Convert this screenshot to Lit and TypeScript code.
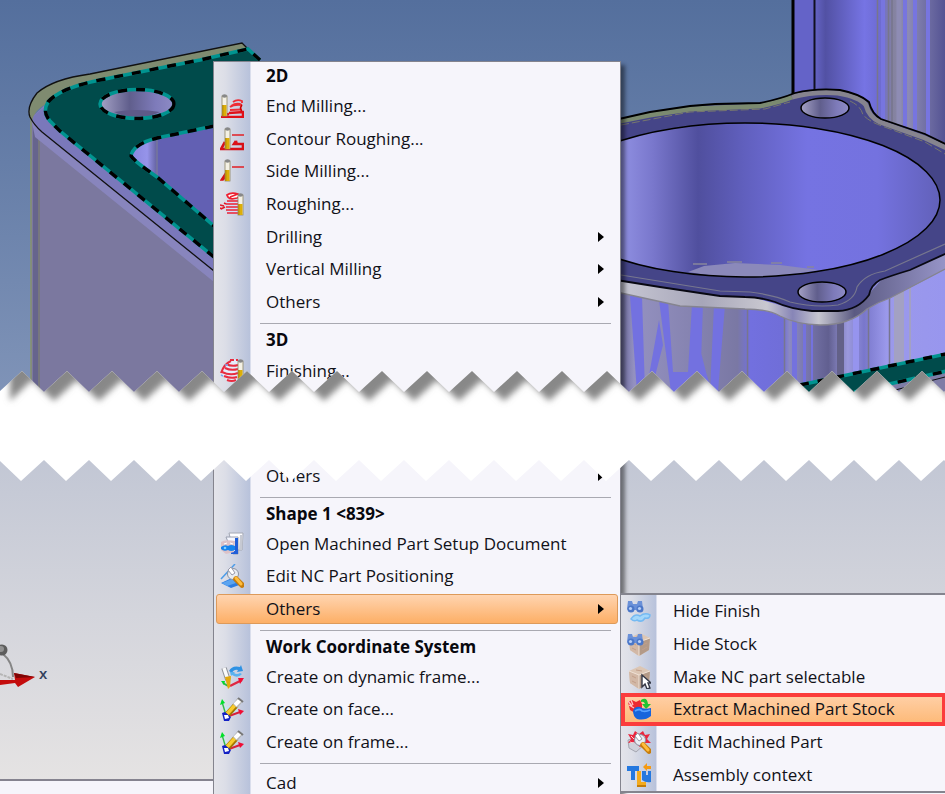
import { LitElement, html, svg, css, nothing } from "lit";
import { customElement, property } from "lit/decorators.js";

type Entry = { label: string; icon?: string; sub?: boolean; state?: string };

const cutter = (x: number, y: number) => svg`
  <rect x=${x} y=${y + 2} width="5" height="20" fill="#f4f1e4" stroke="#8d8564" stroke-width=".8"/>
  <rect x=${x + 0.5} y=${y + 11} width="4" height="11" fill="#dcae08"/>
  <path d="M${x + 0.8} ${y + 11}v11" stroke="#a57c00"/>
  <ellipse cx=${x + 2.5} cy=${y + 2} rx="2.6" ry="1.7" fill="#888"/>`;

const pencilAxes = svg`
  <path d="M3 6L8 20" stroke="#cfe6ee" stroke-width="3"/>
  <path d="M2 5L6 18" stroke="#35b84a" stroke-width="1.400"/><path d="M0 8L2 2L5 6Z" fill="#00e02a"/>
  <path d="M9 19L20 15" stroke="#d8213b" stroke-width="2"/><path d="M18 12L24 14L20 18Z" fill="#f00c34"/>
  <path d="M7 18L16 8" stroke="#a47700" stroke-width="6"/><path d="M7 17L16 7" stroke="#f9cb2c" stroke-width="3.500"/>
  <path d="M15 9L20 3" stroke="#b5b5b5" stroke-width="6"/><path d="M15 8L20 3" stroke="#fff" stroke-width="4"/><path d="M18 1L23 5" stroke="#777" stroke-width="2"/>
  <path d="M2 16l3-1l6 5l-2 4h-5z" fill="#1321c4"/><path d="M4 18l4 0l1 3l-4 1z" fill="#fff"/>`;

const cube = svg`
  <path d="M2 6L13 1L23 6L22 18L12 24L3 18Z" fill="#dcc6b4"/>
  <path d="M2 6L12 10L12 24L3 18Z" fill="#d2b8a6"/><path d="M12 10L23 6L22 18L12 24Z" fill="#b39a88"/>
  <path d="M2 6L12 10L23 6M12 10V24" fill="none" stroke="#f0e2d6" stroke-width="1"/>
  <path d="M5 11l4 2M5 16l4 2M15 13l5-2M15 18l5-3M9 5l6 1" stroke="#c29f8a" stroke-width="1"/>`;

const binoculars = svg`
  <path d="M1 2h4l1 3h4l1-3h4l1 8a4 4 0 0 1-7 1h-2a4 4 0 0 1-7-1z" fill="#6a90d8"/>
  <circle cx="4" cy="10" r="3.500" fill="#4b77c8"/><circle cx="13" cy="10" r="3.500" fill="#4b77c8"/>
  <circle cx="3.500" cy="9.500" r="1.600" fill="#b9d0f7"/><circle cx="12.500" cy="9.500" r="1.600" fill="#b9d0f7"/>`;

const wrench = svg`
  <circle cx="13" cy="10" r="5.500" fill="#e8ecf2" stroke="#8b92a0"/><path d="M11 3l4 6l-3 2l-4-5z" fill="#fff" stroke="#99a"/>
  <path d="M16 15L22 21" stroke="#c77d0c" stroke-width="5.500" stroke-linecap="round"/>
  <path d="M16 14L21 20" stroke="#ffbd3d" stroke-width="3" stroke-linecap="round"/>`;

const icons: Record<string, unknown> = {
  endMilling: svg`
    <path d="M9 20L2 21M1 23H23V18L9 19" fill="none" stroke="#e01018" stroke-width="2.500"/>
    <path d="M10 13q4-3 12-2M10 16l12-.5M13 8q4-3 9-1v2M11 12q6-4 11-1" fill="none" stroke="#ee2c34" stroke-width="1.800"/>
    <path d="M22 11q-3 4 0 6" fill="none" stroke="#c00" stroke-width="1.500"/>${cutter(2, 0)}`,
  contour: svg`
    <path d="M12 8H24" stroke="#e02a30" stroke-width="1.600"/>
    <path d="M5 15L1 22H23V17H14L16 14" fill="none" stroke="#d81018" stroke-width="2.600"/>
    <path d="M14 17l3-4l1 4z" fill="#e01018"/>${cutter(5, 0)}`,
  side: svg`<path d="M12 8H24" stroke="#e02a30" stroke-width="1.600"/>
    <path d="M5 15L1 21L3 21L6 18Z" fill="#d81018" stroke="#d81018" stroke-width="1.500"/>${cutter(5, 0)}`,
  roughing: svg`
    <path d="M6 9H20V22H7Z" fill="#cfe0fb"/>
    <path d="M7 3q4-3 11-1q4 2-1 4q-7 2-9-1zM10 5l8-3" fill="#fff" stroke="#ee2030" stroke-width="1.800"/>
    <path d="M7 9h12M6 12h13M6 15h13M6 18h13M7 21h12" stroke="#ee2030" stroke-width="1.600"/>
    <path d="M0 13l4 1M1 17l4-2M0 16l2 1M4 11l2 1" stroke="#e01828" stroke-width="1.600"/>${cutter(18, 1)}`,
  finishing: svg`
    <path d="M1 14Q6 2 14 0L20 3V20Q12 26 6 20Z" fill="#e5ecfb"/>
    <path d="M10 1h4M16 1h2M6 5q6 3 12 1M5 9q6 3 13 1M2 13q8 4 16 1M4 17q7 3 13 1M7 21q5 2 9 0M1 14Q4 5 11 2" fill="none" stroke="#e82c40" stroke-width="2"/>
    <path d="M1 16l2 1M5 6h3" stroke="#78aaf5" stroke-width="1.500"/>${cutter(18, 0)}`,
  document: svg`
    <path d="M9 1h14l-1 17h-9z" fill="#fdfdff" stroke="#a4a8b4"/><path d="M20 3h3l-1 15h-3z" fill="#c6c9d2"/>
    <path d="M6 5h12v17h-5z" fill="#f5f7ff" stroke="#9aa0b0"/>
    <path d="M15 6h3v16h-7v-3h4z" fill="#205ed8"/><path d="M1 10Q5 7 15 9L14 20L6 22L1 18Z" fill="#dcc2c8"/>
    <path d="M1 15q4-3 7-1q3-2 7 0v4q-4 2-7 0q-4 2-7-1z" fill="#1684ee"/><circle cx="5" cy="16" r="1.300" fill="#83ceff"/>
    <path d="M4 12l3-1M10 11l3 1" stroke="#fff"/>`,
  positioning: svg`
    <path d="M1 19L14 13L22 20L11 24Z" fill="#2c7de2"/><path d="M2 19L12 15L16 19L7 22Z" fill="#5ba4f0"/>
    <path d="M1 15L15 0" stroke="#4c9ce8" stroke-width="1.500"/>${wrench}`,
  dynamic: svg`
    <path d="M9 6q3-6 11-4l1-2l2 6l-6 1l1-2q-4-1-6 3z" fill="#2e92e4"/><path d="M22 9q-4 5-10 1l-1 1l-1-4l5 0l-1 1q3 2 6 0z" fill="#5ab2f0"/>
    <path d="M10 21L22 15" stroke="#e02842" stroke-width="2.500"/><path d="M18 13L24 13L20 19Z" fill="#f00c34"/>
    <path d="M8 21L3 18" stroke="#24b944" stroke-width="2"/><path d="M1 16l4 0l-1 4z" fill="#00d92f"/>
    <path d="M4 3L8 15" stroke="#8d9097" stroke-width="5.500"/><path d="M4 3L8 15" stroke="#fafafa" stroke-width="3.500"/>
    <path d="M5 12L11 11L10 22L8 24Z" fill="#e2a90c"/>`,
  face: svg`<path d="M5 10L16 8L19 16L8 19Z" fill="#c4e4f4"/>${pencilAxes}`,
  frame: pencilAxes,
  hideFinish: svg`${binoculars}
    <path d="M4 20q4-6 9-3q5-4 10-1q0 4-5 3q-3 5-8 2q-3 2-6-1z" fill="#a3d7fa" stroke="#75baf2" stroke-width="1.500"/>`,
  hideStock: svg`${cube}${binoculars}`,
  selectable: svg`${cube}<path d="M15 10V22L18 19L20 24L23 23L21 18H24Z" fill="#fff" stroke="#343846" stroke-width="1.400"/>`,
  extract: svg`
    <path d="M1 5L5 3L9 5L13 3L15 7V14L8 16L3 13Z" fill="#ed2932"/><path d="M1 4l4 5M4 3l2 5M2 8l5 3" stroke="#ffc2c3" stroke-width="1.300"/>
    <path d="M14 3q6-4 7 4h3l-5 5l-4-5h3q-1-3-4-2z" fill="#21c230"/>
    <path d="M6 14Q8 9 13 10Q17 13 24 11V19Q18 24 10 22Q6 19 6 14Z" fill="#1764dc"/>
    <path d="M8 14q5-3 7 0q4 1 8-1" fill="none" stroke="#58a2ff" stroke-width="1.800"/>`,
  edit: svg`
    <path d="M1 10L10 7L18 14L9 22L2 18Z" fill="#cfd1da" stroke="#a4a6b0"/>
    <path d="M1 4l5 1l2-4l4 3l4-3l2 4l5-1l-3 5l4 4l-6 0l-5 4l-6-5l-6 1l3-4z" fill="#ea263e"/>
    <path d="M4 6l3 3M10 3l1 4M18 6l-3 3M3 12l3 1" stroke="#ffced0"/>${wrench}`,
  assembly: svg`
    <path d="M0 3H12V8H8V17H4V8H0Z" fill="#2478df"/><path d="M10 8h4v11h5v4H10Z" fill="#f3ab1f"/><path d="M10 22h9v2h-9z" fill="#c47d08"/>
    <path d="M15 8h4v4h2V8h3v11q-5 1-9-2z" fill="#2478df"/><path d="M16 4l4-4v3h4v3h-4v2z" fill="#f59a13"/>`,
};

@customElement("menu-items")
class MenuItems extends LitElement {
  @property({ attribute: false }) entries: Entry[] = [];

  static styles = css`
    :host { display: grid; grid-auto-rows: 1fr; }
    button {
      display: flex; align-items: center; gap: 22px; min-width: 0;
      margin: 1px 2px; padding: 0 13px 0 3px; border: 1px solid transparent; border-radius: 3px;
      background: none; color: #111118; font: inherit; text-align: left; white-space: nowrap;
    }
    .icon { flex: none; width: 24px; height: 24px; }
    .label { flex: 1; }
    .arrow { flex: none; width: 6px; height: 10px; }
    .hot { background: linear-gradient(#ffd4b0, #fdaf66); border-color: #dd9a5a; }
    .marked { background: linear-gradient(#ffd0a8, #fdb976); outline: 4px solid #fb3c3c; outline-offset: -3px; border-radius: 0; margin: 1px 0 1px 1px; padding-left: 4px; }
  `;

  render() {
    return this.entries.map(e => html`
      <button type="button" role="menuitem" class=${e.state ?? ""} aria-haspopup=${e.sub ? "menu" : nothing}>
        <svg class="icon" viewBox="0 0 24 24" aria-hidden="true">${e.icon ? icons[e.icon] : nothing}</svg>
        <span class="label">${e.label}</span>
        ${e.sub ? html`<svg class="arrow" viewBox="0 0 6 10" aria-hidden="true"><path d="M0 0L6 5L0 10Z"/></svg>` : nothing}
      </button>`);
  }
}

const milling: Entry[] = [
  { label: "End Milling...", icon: "endMilling" },
  { label: "Contour Roughing...", icon: "contour" },
  { label: "Side Milling...", icon: "side" },
  { label: "Roughing...", icon: "roughing" },
  { label: "Drilling", sub: true },
  { label: "Vertical Milling", sub: true },
  { label: "Others", sub: true },
];
const shape: Entry[] = [
  { label: "Open Machined Part Setup Document", icon: "document" },
  { label: "Edit NC Part Positioning", icon: "positioning" },
  { label: "Others", sub: true, state: "hot" },
];
const workFrame: Entry[] = [
  { label: "Create on dynamic frame...", icon: "dynamic" },
  { label: "Create on face...", icon: "face" },
  { label: "Create on frame...", icon: "frame" },
];
const stock: Entry[] = [
  { label: "Hide Finish", icon: "hideFinish" },
  { label: "Hide Stock", icon: "hideStock" },
  { label: "Make NC part selectable", icon: "selectable" },
  { label: "Extract Machined Part Stock", icon: "extract", state: "marked" },
  { label: "Edit Machined Part", icon: "edit" },
  { label: "Assembly context", icon: "assembly" },
];

const PERIOD = 45;
const TEETH = 60;
let upperEdge = "M-23 21";
let lowerEdge = "";
for (let i = -1; i < TEETH; i++) upperEdge += `L${22 + i * PERIOD} 0L${44 + i * PERIOD} 21`;
for (let i = TEETH; i >= -1; i--) lowerEdge += `L${21 + i * PERIOD} 110L${-1 + i * PERIOD} 89`;
const tear = `${upperEdge}${lowerEdge}Z`;
const above = `M0 21L0 21L22 0${upperEdge.slice(upperEdge.indexOf("L44 21"))}V-60H0Z`;

const tealEdge = "M260 60L248 49L200 60L100 80Q60 88 48 102Q42 112 50 121L60 131L214 257";
const pocketEdge = "M214 126L157 138Q133 144 131 156Q134 161 157 177L214 226";
const flangeTop = "M610 121L650 112L690 106L715 104L760 103Q780 99 795 93Q815 88 840 90Q860 94 869 102Q872 114 881 119L925 134L960 151";
const flangeLow = "L960 247L910 270Q890 276 880 280Q871 285 869 295Q858 310 838 311L812 311Q790 309 775 302Q760 297 745 297L720 296L660 287L610 279";
const lowOnly = "M960 247" + flangeLow.slice(8);

@customElement("cad-scene")
class CadScene extends LitElement {
  static styles = css`
    :host { display: block; }
    svg { display: block; width: 100%; height: 100%; }
  `;

  stripe(x: number, w: number, color: string, top = 300) {
    return svg`<rect x=${x} y=${top} width=${w} height=${395 - top} fill=${color}/>`;
  }

  dashed(d: string) {
    return svg`<path d=${d} fill="none" stroke="#009490" stroke-width="3.500"/>
      <path d=${d} fill="none" stroke="#000" stroke-width="3.500" stroke-dasharray="9 9"/>`;
  }

  render() {
    return html`<svg viewBox="0 0 945 794" preserveAspectRatio="xMinYMin slice" role="img" aria-label="Machined part model">
      <defs>
        <linearGradient id="sky" x2="0" y2="1"><stop stop-color="#546f9d"/><stop offset="1" stop-color="#8094b8"/></linearGradient>
        <linearGradient id="ground" x2="0" y2="1"><stop stop-color="#c1c6d4"/><stop offset=".5" stop-color="#d4d5dc"/><stop offset="1" stop-color="#e5e3e3"/></linearGradient>
        <linearGradient id="bore" gradientUnits="userSpaceOnUse" x1="621" x2="942" y1="0" y2="0">
          <stop stop-color="#9090e2"/><stop offset=".1" stop-color="#7977cc"/><stop offset=".24" stop-color="#504f9e"/><stop offset=".38" stop-color="#605fbd"/>
          <stop offset=".58" stop-color="#7573e2"/><stop offset=".8" stop-color="#7472df"/><stop offset="1" stop-color="#6160b8"/></linearGradient>
        <linearGradient id="column" gradientUnits="userSpaceOnUse" x1="815" x2="945" y1="0" y2="0">
          <stop stop-color="#6463c4"/><stop offset=".08" stop-color="#5251a4"/><stop offset=".38" stop-color="#7674e4"/><stop offset=".5" stop-color="#6d6bd2"/>
          <stop offset=".6" stop-color="#84829f"/><stop offset=".72" stop-color="#8c8ab4"/><stop offset="1" stop-color="#545393"/></linearGradient>
        <linearGradient id="hole"><stop stop-color="#a5a2c6"/><stop offset=".4" stop-color="#605e8c"/><stop offset=".75" stop-color="#7e7bba"/><stop offset="1" stop-color="#8d8bc5"/></linearGradient>
        <linearGradient id="fillet" gradientUnits="userSpaceOnUse" x1="131" x2="158" y1="0" y2="0"><stop stop-color="#8785dc"/><stop offset=".6" stop-color="#9694ea"/><stop offset="1" stop-color="#5d5b98"/></linearGradient>
        <linearGradient id="wall" gradientUnits="userSpaceOnUse" x1="621" x2="945" y1="0" y2="0">
          <stop stop-color="#6d6b9d"/><stop offset=".04" stop-color="#9491c0"/><stop offset=".36" stop-color="#7a78a4"/><stop offset=".4" stop-color="#7270df"/><stop offset=".5" stop-color="#706ed8"/>
          <stop offset=".52" stop-color="#8b89c2"/><stop offset=".64" stop-color="#615f90"/><stop offset=".7" stop-color="#9b99dd"/><stop offset=".75" stop-color="#7977cb"/>
          <stop offset=".82" stop-color="#9b99eb"/><stop offset="1" stop-color="#9896ee"/></linearGradient>
        <linearGradient id="bevel" gradientUnits="userSpaceOnUse" x1="621" x2="945" y1="0" y2="0">
          <stop stop-color="#c7c7d3"/><stop offset=".25" stop-color="#a7a6b9"/><stop offset=".45" stop-color="#c9c8d0"/><stop offset=".53" stop-color="#8785b7"/><stop offset=".61" stop-color="#c6c6d0"/><stop offset=".72" stop-color="#5b5a82"/><stop offset="1" stop-color="#9694c7"/></linearGradient>
      </defs>
      <rect width="945" height="400" fill="url(#sky)"/>
      <rect y="450" width="945" height="330" fill="url(#ground)"/>

      <path d="M31 110L214 262V400H31Z" fill="#7b789f"/>
      <path d="M33 122H39V400H33Z" fill="#66648d"/><path d="M31 118V400" stroke="#87936e" stroke-width="1.500"/><path d="M39 130V400" stroke="#77777f" stroke-width="2"/>
      <path d="M31 118L45 105L214 258V282L35 137Z" fill="#8885bd"/>
      <path d="M31 118L48 104L214 252V271L42 132Z" fill="#7a78bb"/>
      <path d="M29 117Q28 104 37 93Q53 79 90 74L242 43L250 50L100 80Q60 88 46 104Q34 110 32 121Z" fill="#7f8b70"/>
      <path d="M260 60L247 48L242 43L90 74Q53 79 37 93Q26 107 30 117Q34 125 42 132L214 271" fill="none" stroke="#111" stroke-width="1.300"/>
      <path d="${tealEdge}L260 257Z" fill="#004b4b"/>
      <path d="${pocketEdge}Z" fill="#6260b3"/>
      <path d="M157 138Q133 144 131 156Q134 161 157 177Z" fill="url(#fillet)"/><path d="M157 140V177" stroke="#77779c" stroke-width="1.500"/>
      ${this.dashed(tealEdge)}${this.dashed(pocketEdge)}
      <ellipse cx="137" cy="104" rx="37" ry="14" fill="url(#hole)"/><path d="M114 112Q137 108 160 112L150 116H124Z" fill="#5e5a88"/>
      <ellipse cx="137" cy="104" rx="37" ry="14.500" fill="none" stroke="#009490" stroke-width="3.500"/>
      <ellipse cx="137" cy="104" rx="37" ry="14.500" fill="none" stroke="#000" stroke-width="3.500" stroke-dasharray="9 9"/>

      <rect x="792" width="23" height="100" fill="#6463c8"/><rect x="815" width="145" height="160" fill="url(#column)"/>
      <path d="M793 0V97" stroke="#000" stroke-width="3"/><path d="M814.500 0V90" stroke="#101020" stroke-width="2"/>
      <path d="M877.500 0V118M888.500 0V122M892 0V124" stroke="#77768c" stroke-width="1.500"/>
      <path d="M883 0V121M905 0V128M915 0V132M928 0V138" stroke="#7775df" stroke-width="4"/>
      <path d="M899 0V126" stroke="#8e8cb4" stroke-width="5"/>

      <rect x="621" y="270" width="339" height="125" fill="url(#wall)"/>
      <path d="M630 296H642L645 392H637ZM659 300H668L673 372H688L692 304H703L700 392H671ZM646 392L659 320L663 345L651 392ZM690 392L694 325L706 372L712 392H702L693 350ZM714 305H725L718 392H710Z" fill="#7371e0"/>
      ${this.stripe(792, 5, "#7472de", 318)}${this.stripe(803, 3, "#7472de", 322)}${this.stripe(811, 2, "#7472de", 322)}${this.stripe(837, 7, "#636188", 320)}
      ${this.stripe(853, 6, "#9694ee", 314)}${this.stripe(894, 10, "#a3a1c3", 290)}${this.stripe(909, 2, "#a3a1c3", 285)}
      <path d="M747.500 305V392M784.500 315V376M868.500 300V376M889.500 285V376" stroke="#77768f" stroke-width="1.500"/>
      <path d="M621 278L745 295L790 308L838 311L868 295L885 276L960 246V262L890 298Q878 302 867 309Q850 325 820 325Q795 324 780 316Q768 309 745 309L680 306L621 293Z" fill="url(#bevel)"/>
      <path d="M621 293L680 306L745 309Q768 309 780 316Q795 324 820 325Q850 325 867 309Q878 302 890 298L945 269" fill="none" stroke="#85848f" stroke-width="1.300"/>
      <path d="${flangeTop}${flangeLow}Z" fill="#454588"/>
      <path d="M610 123L650 115L690 109L760 106Q780 102 792 97" fill="none" stroke="#7b8a70" stroke-width="5"/>
      <path d="M792 97Q815 91 838 93Q860 97 866 105Q869 117 880 122L925 138L960 154" fill="none" stroke="#86848e" stroke-width="5"/>
      <path d="M621 125L690 112L765 109L790 102M850 101Q861 106 863 115Q870 122 882 126L925 142L945 154" fill="none" stroke="#77776e" stroke-dasharray="8 3"/>
      <path d=${flangeTop} fill="none" stroke="#000" stroke-width="1.800"/>
      <path d=${lowOnly} fill="none" stroke="#080812" stroke-width="1.800"/>
      <path d="M621 275L720 291L750 292Q775 295 790 302Q815 308 838 305Q855 300 857 287Q865 274 885 271L945 244" fill="none" stroke="#77778e" stroke-width="1.200"/>
      <ellipse cx="745" cy="200" rx="195" ry="77" fill="url(#bore)"/>
      <path d="M688 272L704 266L735 263L780 265L819 270Q780 277 745 277Q715 277 688 272Z" fill="#8b89ba"/>
      <path d="M693 264h14M727 262h15M771 263h11M807 267h7" stroke="#88879c" stroke-width="1.500"/>
      <ellipse cx="745" cy="200" rx="195" ry="77" fill="none" stroke="#000" stroke-width="1.500"/>
      <ellipse cx="825" cy="108" rx="24" ry="10" fill="url(#hole)" stroke="#000" stroke-width="1.500"/>
      <ellipse cx="822" cy="292" rx="24" ry="10" fill="url(#hole)" stroke="#000" stroke-width="1.500"/>

      <path d="M764 394L960 351V396H764Z" fill="#004b4b"/><path d="M840 396L960 367V400H840Z" fill="#7f7da6"/>
      ${this.dashed("M800 385L960 351")}${this.dashed("M845 394L960 368")}
      <path d="M880 394L945 377" stroke="#111"/>

      <path d="M0 674L13 679" fill="none" stroke="#b5b5b5" stroke-width="2" stroke-dasharray="3 1"/>
      <path d="M3 654Q13 662 13 677" fill="none" stroke="#858585" stroke-width="2"/>
      <circle cx="2" cy="650" r="5.500" fill="#5d5d5d"/><circle cx="1" cy="649" r="3" fill="#929292"/>
      <path d="M0 680H15L14 673L35 677L18 687L15 683L0 685Z" fill="#c40c0c"/><path d="M14 673L35 677L16 678Z" fill="#7e0505"/>
    </svg>`;
  }
}

@customElement("app-root")
class AppRoot extends LitElement {
  static styles = css`
    :host { display: block; position: relative; min-height: 100vh; overflow: hidden; background: #f6f5fb; color: #111118; font: 17px/24px "Open Sans", "Noto Sans", sans-serif; }
    .scene { position: absolute; inset: 0; }
    .axis { position: absolute; left: 39px; top: 661px; font-size: 15px; font-weight: 600; color: #33405c; }
    .status { position: absolute; inset: 779px 0 auto; height: 40px; border-top: 2px solid #85838f; background: #f6f5fb; }
    .menu {
      position: absolute; box-sizing: border-box; border: 1px solid #84848e;
      background: linear-gradient(90deg, #e4e4ea, #dcdee7 30%, #b8c2db 97%, #f6f5fb) 0 0 / 37px 100% no-repeat, #f6f5fb;
      box-shadow: 4px 4px 4px #0007;
    }
    .main { left: 213px; top: 61px; width: 408px; }
    .sub { left: 620px; right: 0; top: 593px; border-width: 2px 0 2px 1px; box-shadow: none; background-size: 36px 100%; }
    h2 { margin: 0; padding-left: 52px; height: 28px; font-size: 17px; line-height: 28px; font-weight: 700; color: #08080e; }
    hr { height: 1px; margin: 5px 9px 2px 46px; border: 0; background: #a9a9b1; }
    .seven { height: 228px; }
    .one { height: 33px; }
    .three { height: 97px; }
    .six { height: 196px; }
    .gap { height: 72px; }
    .tear { position: absolute; left: 0; top: 371px; width: 100%; height: 112px; pointer-events: none; }
  `;

  render() {
    return html`
      <cad-scene class="scene"></cad-scene>
      <span class="axis">x</span>
      <div class="status"></div>
      <nav class="menu main" role="menu" aria-label="Machining">
        <h2>2D</h2>
        <menu-items class="seven" .entries=${milling}></menu-items>
        <hr>
        <h2>3D</h2>
        <menu-items class="one" .entries=${[{ label: "Finishing...", icon: "finishing" }]}></menu-items>
        <div class="gap"></div>
        <menu-items class="one" .entries=${[{ label: "Others", sub: true }]}></menu-items>
        <hr>
        <h2>Shape 1 &lt;839&gt;</h2>
        <menu-items class="three" .entries=${shape}></menu-items>
        <hr>
        <h2>Work Coordinate System</h2>
        <menu-items class="three" .entries=${workFrame}></menu-items>
        <hr>
        <menu-items class="one" .entries=${[{ label: "Cad", sub: true }]}></menu-items>
      </nav>
      <svg class="tear" aria-hidden="true">
        <defs>
          <clipPath id="band"><path d=${tear}/></clipPath>
          <filter id="soft" x="-5%" y="-50%" width="110%" height="200%"><feGaussianBlur stdDeviation="3"/></filter>
        </defs>
        <path d=${tear} fill="#fff"/>
        <g clip-path="url(#band)"><path d=${above} transform="translate(10 9)" fill="#888" filter="url(#soft)"/></g>
      </svg>
      <nav class="menu sub" role="menu" aria-label="Others">
        <menu-items class="six" .entries=${stock}></menu-items>
      </nav>`;
  }
}
